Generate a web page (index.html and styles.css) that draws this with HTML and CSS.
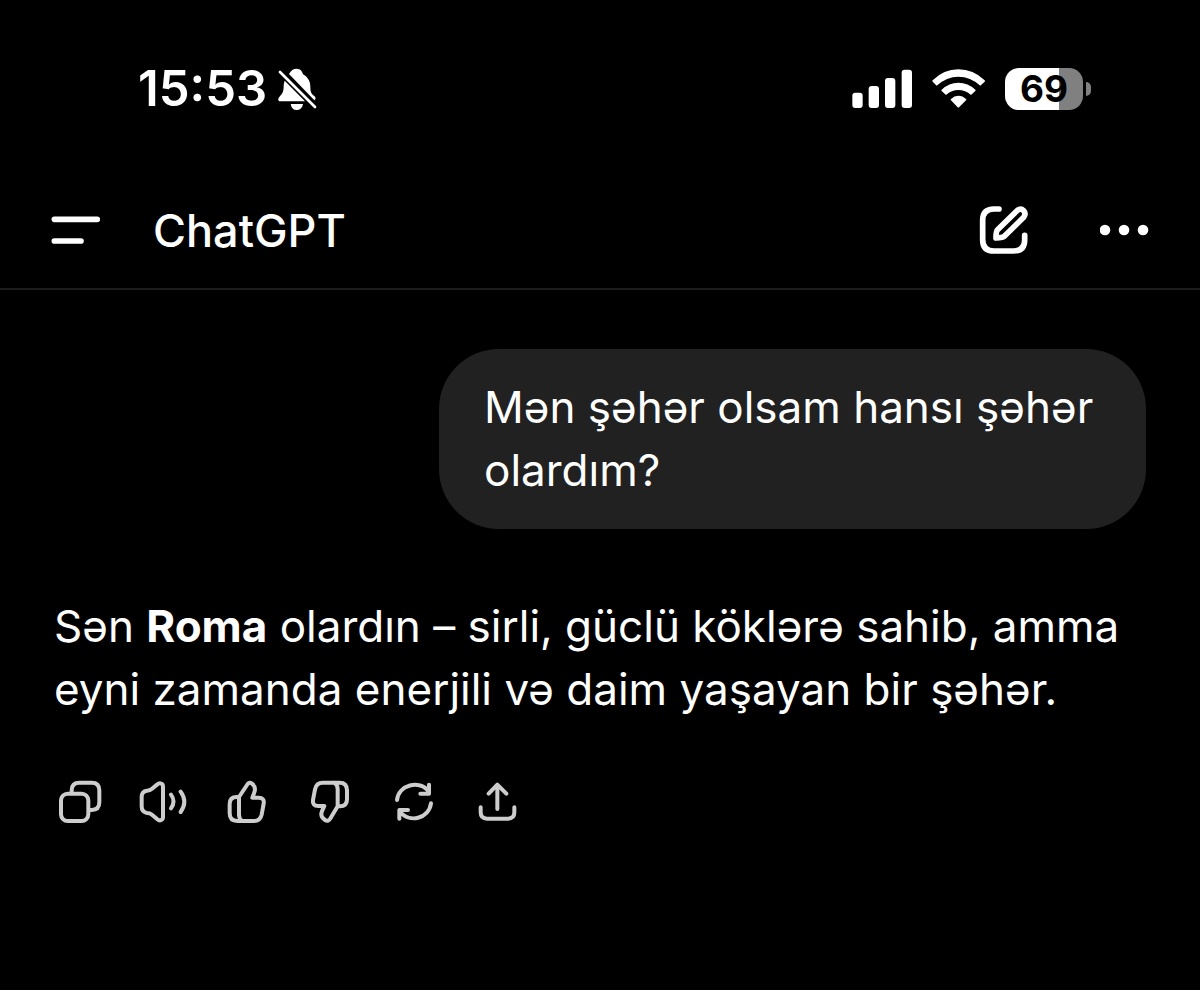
FILE: index.html
```html
<!DOCTYPE html>
<html lang="az">
<head>
<meta charset="utf-8">
<meta name="viewport" content="width=device-width, initial-scale=1">
<title>ChatGPT</title>
<link rel="stylesheet" href="styles.css">
</head>
<body>
<div class="status">
  <div class="status-left">
    <span class="clock">15:53</span>
    <svg class="bell" viewBox="471 48 120 135" aria-hidden="true">
      <path fill="#fff" d="M507 72C513 61 520 56 530 56C541 56 548 65 549 73C562 80 571 93 571 110C571 126 574 131 583 138C588 142 588 147 583 151ZM494 92L555 154H481C474 154 473 147 478 141C487 132 490 127 491 112C491 103 492 98 494 92ZM512 162H549C547 174 540 180 530 180C520 180 514 174 512 162Z"/>
      <path stroke="#fff" stroke-width="8" stroke-linecap="round" d="M480 66L585 171"/>
    </svg>
  </div>
  <div class="status-right">
    <svg class="signal" viewBox="36 54 180 120" fill="#fff" aria-hidden="true">
      <rect x="37" y="125" width="31" height="46" rx="9"/>
      <rect x="86" y="105" width="31" height="66" rx="9"/>
      <rect x="135" y="81" width="31" height="90" rx="9"/>
      <rect x="185" y="56" width="31" height="115" rx="9"/>
    </svg>
    <svg class="wifi" viewBox="276 54 159 120" fill="#fff" aria-hidden="true">
      <path d="M278 88Q311 55 355 55Q400 55 434 88Q436 90 434 92L421 104Q391 77 355 77Q320 77 290 104L278 92Q276 90 278 88ZM305 116Q327 95 355 95Q384 95 406 116Q408 118 406 120L393 132Q376 117 355 117Q335 117 318 132L305 120Q303 118 305 116ZM333 144Q343 134 355 134Q368 134 378 144Q380 146 378 148L357 169Q355 171 353 169L333 148Q331 146 333 144Z"/>
    </svg>
    <div class="battery"><span class="battery-level">69</span></div>
  </div>
</div>
<header class="header">
  <button class="icon-button" aria-label="Menu">
    <svg class="icon-large" viewBox="31 46 150 150" stroke="#fff" stroke-width="17" stroke-linecap="round" aria-hidden="true"><path d="M44 86H173M44 151H124"/></svg>
  </button>
  <h1 class="title">ChatGPT</h1>
  <button class="icon-button" aria-label="New chat">
    <svg class="icon-large" viewBox="56 48 150 150" fill="none" stroke="#fff" stroke-width="17" stroke-linecap="round" stroke-linejoin="round" aria-hidden="true"><path d="M116 57H101Q67 57 67 91V149Q67 183 101 183H159Q193 183 193 149V136M111 120L170 62Q181 53 190 62Q198 71 190 82L132 139Q128 143 107 144Q107 125 111 120Z"/></svg>
  </button>
  <button class="icon-button more" aria-label="More">
    <svg class="icon-large" viewBox="420 47 150 150" fill="#fff" aria-hidden="true"><circle cx="435" cy="119" r="16"/><circle cx="492" cy="119" r="16"/><circle cx="549" cy="119" r="16"/></svg>
  </button>
</header>
<main class="chat">
  <p class="bubble">Mən şəhər olsam hansı şəhər olardım?</p>
  <p class="answer">Sən <strong>Roma</strong> olardın – sirli, güclü köklərə sahib, amma eyni zamanda enerjili və daim yaşayan bir şəhər.</p>
  <div class="actions">
    <button class="icon-button" aria-label="Copy">
      <svg class="icon" viewBox="48 39 144 144" aria-hidden="true"><rect x="63" y="86" width="82" height="82" rx="20"/><path d="M95 82V76Q95 53 118 53H155Q178 53 178 76V112Q178 135 155 135H150"/></svg>
    </button>
    <button class="icon-button" aria-label="Read aloud">
      <svg class="icon" viewBox="298 39 144 144" aria-hidden="true"><path d="M306 96Q306 79 322 77Q331 76 337 71L353 58Q359 53 365 56Q370 58 370 65V156Q370 163 365 165Q359 168 353 163L337 149Q331 144 322 144Q306 141 306 124ZM394 89Q409 109 394 130M423 80Q445 110 423 141"/></svg>
    </button>
    <button class="icon-button" aria-label="Good response">
      <svg class="icon" viewBox="548 39 144 144" aria-hidden="true"><path d="M596 96L622 57Q627 50 634 55Q644 62 644 73Q644 79 636 98H655Q673 98 670 116L664 149Q660 168 641 168H591Q568 168 568 145V117Q568 96 589 96H596V149Q596 162 606 168"/></svg>
    </button>
    <button class="icon-button" aria-label="Bad response">
      <svg class="icon" viewBox="49 39 144 144" aria-hidden="true"><path d="M144 124L121 162Q115 171 106 165Q94 157 95 147Q95 141 104 123H86Q67 122 70 105L76 73Q80 53 99 53H150Q172 53 172 76V103Q172 124 151 124H144V72Q144 59 134 53"/></svg>
    </button>
    <button class="icon-button" aria-label="Regenerate">
      <svg class="icon" viewBox="299 39 144 144" aria-hidden="true"><path d="M320 105C325 60 386 42 416 80M416 59V86H390M422 115C415 161 357 177 327 138M327 161V135H353"/></svg>
    </button>
    <button class="icon-button" aria-label="Share">
      <svg class="icon" viewBox="549 39 144 144" aria-hidden="true"><path d="M622 132V59M596 86L622 59L649 86M572 127V142Q572 161 591 161H654Q673 161 673 142V127"/></svg>
    </button>
  </div>
</main>
</body>
</html>
```
FILE: styles.css
```css
* {
  box-sizing: border-box;
}

body {
  margin: 0;
  min-height: 100vh;
  background: #000;
  color: #fff;
  font-family: Inter, "Liberation Sans", sans-serif;
  font-size: 44px;
  line-height: 63px;
}

h1,
p {
  margin: 0;
}

.status {
  display: flex;
  justify-content: space-between;
  align-items: center;
  padding: 65px 109px 0 138px;
}

.status-left {
  display: flex;
  align-items: center;
  gap: 10px;
}

.clock {
  font-size: 49px;
  line-height: 47px;
  font-weight: 600;
}

.bell {
  width: 40px;
  height: 45px;
}

.status-right {
  display: flex;
  align-items: center;
  gap: 20px;
}

.signal {
  width: 60px;
  height: 40px;
}

.wifi {
  width: 53px;
  height: 40px;
}

.battery {
  display: flex;
  align-items: center;
  gap: 3px;
}

.battery::after {
  content: "";
  width: 5px;
  height: 14px;
  border-radius: 0 7px 7px 0;
  background: #808080;
}

.battery-level {
  width: 78px;
  border-radius: 14px;
  background: linear-gradient(to right, #fff 69%, #808080 69%);
  color: #000;
  font-size: 37px;
  line-height: 42px;
  font-weight: 700;
  text-align: center;
}

.header {
  display: flex;
  align-items: center;
  padding: 87px 50px 26px;
  border-bottom: 2px solid #1c1c1c;
}

.title {
  flex: 1;
  margin-left: 53px;
  font-size: 45px;
  font-weight: 500;
}

.more {
  margin-left: 71px;
}

.icon-button {
  display: flex;
  padding: 0;
  border: 0;
  background: none;
}

.icon-large {
  width: 50px;
  height: 50px;
}

.chat {
  display: flex;
  flex-direction: column;
  padding: 59px 54px;
}

.bubble {
  align-self: flex-end;
  max-width: 707px;
  padding: 27px 45px;
  border-radius: 60px;
  background: #212121;
}

.answer {
  margin-top: 66px;
}

.actions {
  display: flex;
  justify-content: space-between;
  width: 465px;
  margin: 57px 2px 0;
}

.icon {
  width: 48px;
  height: 48px;
  fill: none;
  stroke: #cdcdcd;
  stroke-width: 12;
  stroke-linecap: round;
  stroke-linejoin: round;
}
```
